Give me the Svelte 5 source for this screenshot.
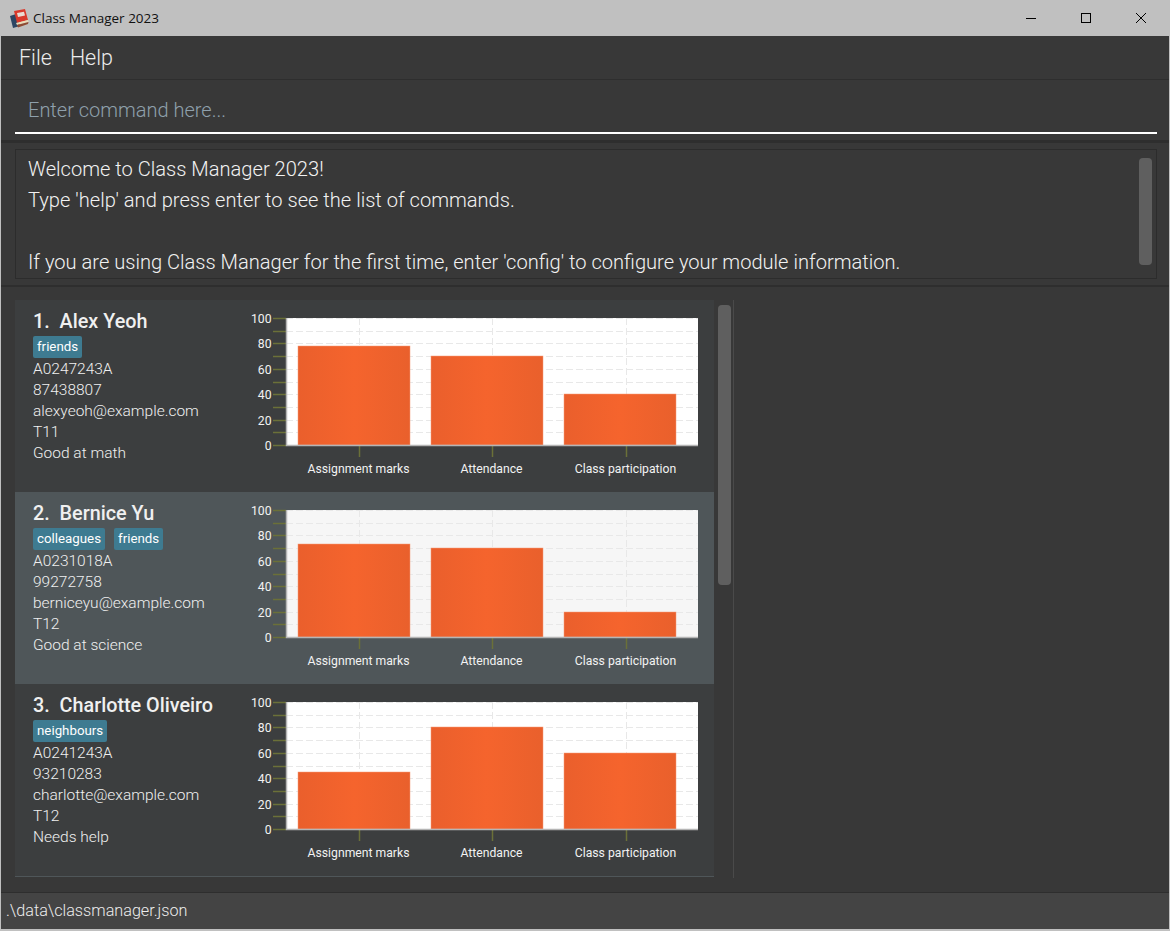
<script>
  const students = [
    { no: 1, name: 'Alex Yeoh', tags: ['friends'], id: 'A0247243A', phone: '87438807', email: 'alexyeoh@example.com', group: 'T11', note: 'Good at math', marks: [78, 70, 40] },
    { no: 2, name: 'Bernice Yu', tags: ['colleagues', 'friends'], id: 'A0231018A', phone: '99272758', email: 'berniceyu@example.com', group: 'T12', note: 'Good at science', marks: [73, 70, 20], selected: true },
    { no: 3, name: 'Charlotte Oliveiro', tags: ['neighbours'], id: 'A0241243A', phone: '93210283', email: 'charlotte@example.com', group: 'T12', note: 'Needs help', marks: [45, 80, 60] }
  ]

  const labels = ['Assignment marks', 'Attendance', 'Class participation']
  // bars sit a little left of their category tick, as in the original chart
  const ticks = [129, 262, 396]
  const bars = [68, 201, 334]
  const major = [0, 20, 40, 60, 80, 100]
  const minor = [10, 30, 50, 70, 90]
  const plotTop = 18
  const plotH = 127

  const y = (v) => Math.round(plotTop + plotH - (v / 100) * plotH)
</script>

<div class="window">
  <header class="titlebar">
    <div class="title">
      <svg class="logo" width="19" height="19" viewBox="0 0 19 19">
        <path d="M0 7 L6 5 L10 17 L3 19 Z" fill="#2d4664" />
        <path d="M4 2 L15 0 L18 11 L7 14 Z" fill="#d9392c" />
        <path d="M7 4 L14 2.8 L15 6.5 L8 8 Z" fill="#eadbd3" />
        <path d="M6 14 L18 11 L18.5 13 L7 16 Z" fill="#e9dcb8" />
        <path d="M7 16 L18.5 13 L18 15 L8 18.5 Z" fill="#8f4a32" />
      </svg>
      <span>Class Manager 2023</span>
    </div>
    <div class="controls">
      <svg width="12" height="12" viewBox="0 0 12 12"><path d="M1 6.5H11" stroke="#000" fill="none" /></svg>
      <svg width="12" height="12" viewBox="0 0 12 12"><rect x="1.5" y="1.5" width="9" height="9" stroke="#000" fill="none" /></svg>
      <svg width="12" height="12" viewBox="0 0 12 12"><path d="M1 1L11 11M11 1L1 11" stroke="#000" fill="none" /></svg>
    </div>
  </header>

  <main class="body">
    <nav class="menu">
      <span>File</span>
      <span>Help</span>
    </nav>

    <section class="command">
      <div class="command-input">Enter command here...</div>
    </section>

    <section class="result-wrap">
      <div class="result">
        <div class="result-text">
          <div>Welcome to Class Manager 2023!</div>
          <div>Type 'help' and press enter to see the list of commands.</div>
          <div>&nbsp;</div>
          <div>If you are using Class Manager for the first time, enter 'config' to configure your module information.</div>
        </div>
        <div class="result-thumb"></div>
      </div>
    </section>

    <section class="list-wrap">
      <div class="list">
        {#each students as s}
          <article class="card" class:selected={s.selected}>
            <div class="info">
              <div class="name">{s.no}.&nbsp; {s.name}</div>
              <div class="tags">
                {#each s.tags as tag}
                  <span class="tag">{tag}</span>
                {/each}
              </div>
              <div class="line">{s.id}</div>
              <div class="line">{s.phone}</div>
              <div class="line">{s.email}</div>
              <div class="line">{s.group}</div>
              <div class="line">{s.note}</div>
            </div>
            <svg class="chart" width="468" height="192" viewBox="0 0 468 192">
              <defs>
                <linearGradient id="bar-fill">
                  <stop offset="0" stop-color="#ea5f2c" />
                  <stop offset="0.5" stop-color="#f5642d" />
                  <stop offset="1" stop-color="#e9602c" />
                </linearGradient>
              </defs>
              <rect x="56" y={plotTop} width="412" height={plotH} class="plot" />
              {#each minor as v}
                <line x1="56" x2="468" y1={y(v) + 0.5} y2={y(v) + 0.5} class="grid" />
                <line x1="43" x2="56" y1={y(v) + 0.5} y2={y(v) + 0.5} class="tick" />
              {/each}
              {#each major as v}
                {#if v > 0}
                  <line x1="56" x2="468" y1={y(v) + 0.5} y2={y(v) + 0.5} class="grid" />
                {/if}
                <line x1="43" x2="56" y1={y(v) + 0.5} y2={y(v) + 0.5} class="tick" />
                <text x="41.5" y={y(v) + 4.5} text-anchor="end" class="axis">{v}</text>
              {/each}
              {#each ticks as t}
                <line x1={t + 0.5} x2={t + 0.5} y1={plotTop} y2={plotTop + plotH} class="grid" />
              {/each}
              {#each s.marks as m, i}
                <rect x={bars[i]} y={y(m)} width="112" height={plotTop + plotH - y(m)} class="bar" fill="url(#bar-fill)" />
                <line x1={ticks[i] + 0.5} x2={ticks[i] + 0.5} y1={plotTop + plotH} y2={plotTop + plotH + 12} class="tick" />
                <text x={ticks[i] - 0.5} y="173" text-anchor="middle" class="axis">{labels[i]}</text>
              {/each}
              <path d={`M56.5 ${plotTop} V${plotTop + plotH + 0.5} H468`} class="axis-line" />
            </svg>
          </article>
        {/each}
      </div>
      <div class="list-track">
        <div class="list-thumb"></div>
      </div>
    </section>

    <footer class="status">.\data\classmanager.json</footer>
  </main>
</div>

<style>
  :global(body) {
    margin: 0;
    background: #383838;
  }

  .window {
    width: 1170px;
    height: 931px;
    display: flex;
    flex-direction: column;
    overflow: hidden;
    font-family: Roboto, "Open Sans", sans-serif;
    background: #c0c0c0;
  }

  .titlebar {
    height: 36px;
    flex: none;
    display: flex;
    align-items: center;
    justify-content: space-between;
    background: #c0c0c0;
  }

  .title {
    display: flex;
    align-items: center;
    gap: 4px;
    padding-left: 10px;
    font-size: 13.5px;
    font-family: "Open Sans", sans-serif;
    color: #111;
  }

  .controls {
    display: flex;
    gap: 43px;
    padding-right: 23px;
  }

  .body {
    flex: 1;
    display: flex;
    flex-direction: column;
    margin: 0 1px 2px 1px;
    background: #383838;
    min-height: 0;
  }

  .menu {
    height: 44px;
    flex: none;
    display: flex;
    align-items: center;
    gap: 18px;
    padding-left: 18px;
    font-size: 21.5px;
    font-weight: 300;
    color: #ececec;
    border-bottom: 1px solid #2e2e2e;
    box-sizing: border-box;
  }

  .command {
    height: 63px;
    flex: none;
    padding-left: 14px;
    border-bottom: 3px solid #2e2e2e;
    box-sizing: border-box;
  }

  .command-input {
    width: 1142px;
    height: 54px;
    box-sizing: border-box;
    padding-top: 18px;
    padding-left: 13px;
    border-bottom: 2px solid #fff;
    font-size: 20px;
    font-weight: 300;
    color: #8fa0ac;
  }

  .result-wrap {
    height: 144px;
    flex: none;
    padding: 6px 0 6px 14px;
    box-sizing: border-box;
    border-bottom: 2px solid #2e2e2e;
  }

  .result {
    width: 1142px;
    height: 130px;
    display: flex;
    justify-content: space-between;
    box-sizing: border-box;
    border: 1px solid #2c2c2c;
    padding: 4px 4px 0 12px;
  }

  .result-text {
    font-size: 20.1px;
    font-weight: 300;
    line-height: 31px;
    color: #f2f2f2;
    white-space: nowrap;
  }

  .result-thumb {
    width: 13px;
    height: 107px;
    margin-top: 4px;
    border-radius: 4px;
    background: #5f5f5f;
  }

  .list-wrap {
    flex: 1;
    display: flex;
    padding: 13px 0 14px 14px;
    min-height: 0;
  }

  .list {
    width: 699px;
    align-self: flex-start;
    border-bottom: 1px solid #4f5659;
  }

  .card {
    height: 192px;
    display: flex;
    background: #3c3e3f;
  }

  .card.selected {
    background: #4f5659;
  }

  .info {
    width: 215px;
    flex: none;
    box-sizing: border-box;
    padding: 10px 0 0 18px;
    color: #f0f0f0;
  }

  .name {
    font-size: 19.8px;
    font-weight: 500;
    line-height: 24px;
    white-space: nowrap;
  }

  .tags {
    display: flex;
    gap: 9px;
    margin: 2px 0 1px;
  }

  .tag {
    height: 22px;
    line-height: 21px;
    padding: 0 4px;
    border-radius: 2px;
    background: #3e7b91;
    color: #fff;
    font-size: 13.3px;
  }

  .line {
    font-size: 15.5px;
    font-weight: 300;
    line-height: 21px;
    white-space: nowrap;
  }

  .chart {
    flex: none;
    display: block;
  }

  .plot {
    fill: #fff;
  }

  .selected .plot {
    fill: #f6f6f6;
  }

  .grid {
    stroke: #e8e8e8;
    stroke-dasharray: 7 3;
  }

  .tick {
    stroke: #6b7038;
    stroke-width: 1.5;
  }

  .axis {
    font-size: 12.2px;
    fill: #f2f2f2;
  }

  .axis-line {
    stroke: #b5b5b5;
    stroke-width: 1.5;
    fill: none;
  }

  .bar {
    stroke: #f59a78;
    stroke-width: 0.5;
  }

  .list-track {
    width: 20px;
    box-sizing: border-box;
    border-right: 1px solid #4a4a4a;
    padding: 5px 2px 0 4px;
  }

  .list-thumb {
    width: 13px;
    height: 280px;
    border-radius: 4px;
    background: #5f5f5f;
  }

  .status {
    height: 37px;
    flex: none;
    box-sizing: border-box;
    border-top: 1px solid #2e2e2e;
    padding: 8px 0 0 5px;
    background: #444;
    color: #ececec;
    font-size: 16.2px;
    font-weight: 300;
  }
</style>
